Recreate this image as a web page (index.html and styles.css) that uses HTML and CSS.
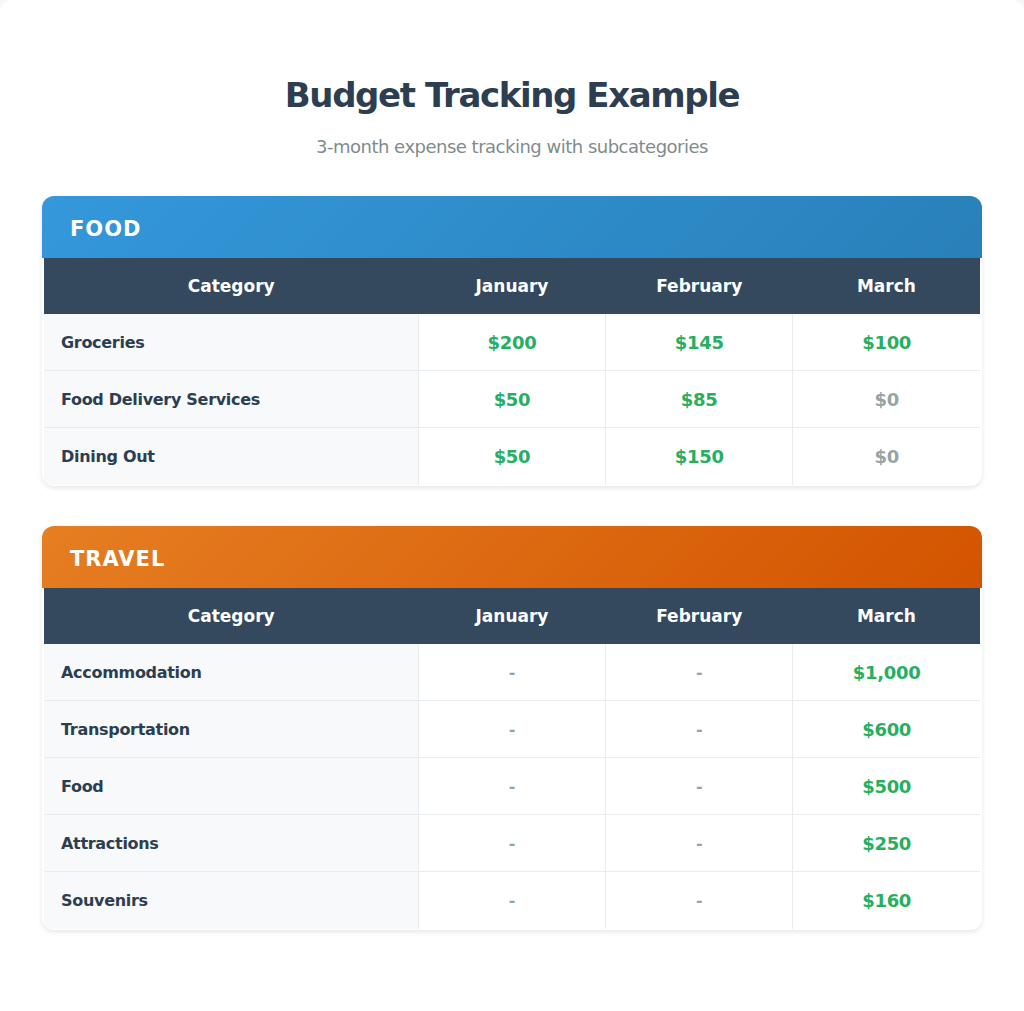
FILE: index.html
```html
<!DOCTYPE html>
<html lang="en">
<head>
    <meta charset="UTF-8">
    <meta name="viewport" content="width=device-width, initial-scale=1.0">
    <title>Budget Tracking Example</title>
    <link rel="stylesheet" href="styles.css">
</head>
<body>
    <div class="container">
        <h1 class="title">Budget Tracking Example</h1>
        <p class="subtitle">3-month expense tracking with subcategories</p>

        <div class="budget-card">
            <div class="card-head food">FOOD</div>
            <div class="table-wrap">
                <table>
                    <thead>
                        <tr>
                            <th class="col-cat">Category</th>
                            <th>January</th>
                            <th>February</th>
                            <th>March</th>
                        </tr>
                    </thead>
                    <tbody>
                        <tr>
                            <td class="cat">Groceries</td>
                            <td class="amount">$200</td>
                            <td class="amount">$145</td>
                            <td class="amount">$100</td>
                        </tr>
                        <tr>
                            <td class="cat">Food Delivery Services</td>
                            <td class="amount">$50</td>
                            <td class="amount">$85</td>
                            <td class="amount zero">$0</td>
                        </tr>
                        <tr>
                            <td class="cat">Dining Out</td>
                            <td class="amount">$50</td>
                            <td class="amount">$150</td>
                            <td class="amount zero">$0</td>
                        </tr>
                    </tbody>
                </table>
            </div>
        </div>

        <div class="budget-card">
            <div class="card-head travel">TRAVEL</div>
            <div class="table-wrap">
                <table>
                    <thead>
                        <tr>
                            <th class="col-cat">Category</th>
                            <th>January</th>
                            <th>February</th>
                            <th>March</th>
                        </tr>
                    </thead>
                    <tbody>
                        <tr>
                            <td class="cat">Accommodation</td>
                            <td class="empty">-</td>
                            <td class="empty">-</td>
                            <td class="amount">$1,000</td>
                        </tr>
                        <tr>
                            <td class="cat">Transportation</td>
                            <td class="empty">-</td>
                            <td class="empty">-</td>
                            <td class="amount">$600</td>
                        </tr>
                        <tr>
                            <td class="cat">Food</td>
                            <td class="empty">-</td>
                            <td class="empty">-</td>
                            <td class="amount">$500</td>
                        </tr>
                        <tr>
                            <td class="cat">Attractions</td>
                            <td class="empty">-</td>
                            <td class="empty">-</td>
                            <td class="amount">$250</td>
                        </tr>
                        <tr>
                            <td class="cat">Souvenirs</td>
                            <td class="empty">-</td>
                            <td class="empty">-</td>
                            <td class="amount">$160</td>
                        </tr>
                    </tbody>
                </table>
            </div>
        </div>
    </div>
</body>
</html>
```

FILE: styles.css
```css
body {
    font-family: "DejaVu Sans", Verdana, sans-serif;
    margin: 0;
    padding: 0;
    background-color: #f4f6f8;
}

.container {
    background-color: #fff;
    padding: 72px 42px 60px;
    min-height: 1011px;
    box-sizing: border-box;
    border-radius: 12px;
}

.title {
    margin: 0;
    text-align: center;
    font-size: 34px;
    letter-spacing: -1.4px;
    line-height: 46px;
    color: #2c3e50;
}

.subtitle {
    margin: 18px 0 39px;
    text-align: center;
    font-size: 18px;
    letter-spacing: -0.5px;
    color: #7f8c8d;
}

.budget-card {
    background-color: #fff;
    border-radius: 12px;
    overflow: hidden;
    box-shadow: 0 2px 5px rgba(0, 0, 0, 0.1);
    margin-bottom: 40px;
}

.card-head {
    height: 62px;
    line-height: 66px;
    padding: 0 28px;
    font-size: 21px;
    font-weight: bold;
    letter-spacing: 1px;
    color: #fff;
}

.card-head.food {
    background: linear-gradient(135deg, #3498db, #2980b9);
}

.card-head.travel {
    background: linear-gradient(135deg, #e67e22, #d35400);
}

.table-wrap {
    padding: 0 2px 1px;
}

table {
    width: 100%;
    border-collapse: collapse;
    table-layout: fixed;
}

th {
    background-color: #34495e;
    color: #fff;
    font-size: 17px;
    height: 56px;
    padding: 0;
    text-align: center;
}

.col-cat {
    width: 40%;
}

td {
    height: 56px;
    padding: 0 17px;
    border-bottom: 1px solid #e9ecef;
    border-left: 1px solid #e9ecef;
    text-align: center;
    background-color: #fff;
}

tbody tr:last-child td {
    border-bottom: none;
    height: 57px;
}

td.cat {
    border-left: none;
    text-align: left;
    background-color: #f8f9fa;
    color: #2c3e50;
    font-weight: bold;
    font-size: 16px;
    letter-spacing: -0.3px;
}

.amount {
    color: #27ae60;
    font-weight: bold;
    font-size: 18px;
    letter-spacing: -0.3px;
}

.amount.zero {
    color: #95a5a6;
}

.empty {
    color: #95a5a6;
    font-size: 16px;
    font-weight: bold;
}
```
